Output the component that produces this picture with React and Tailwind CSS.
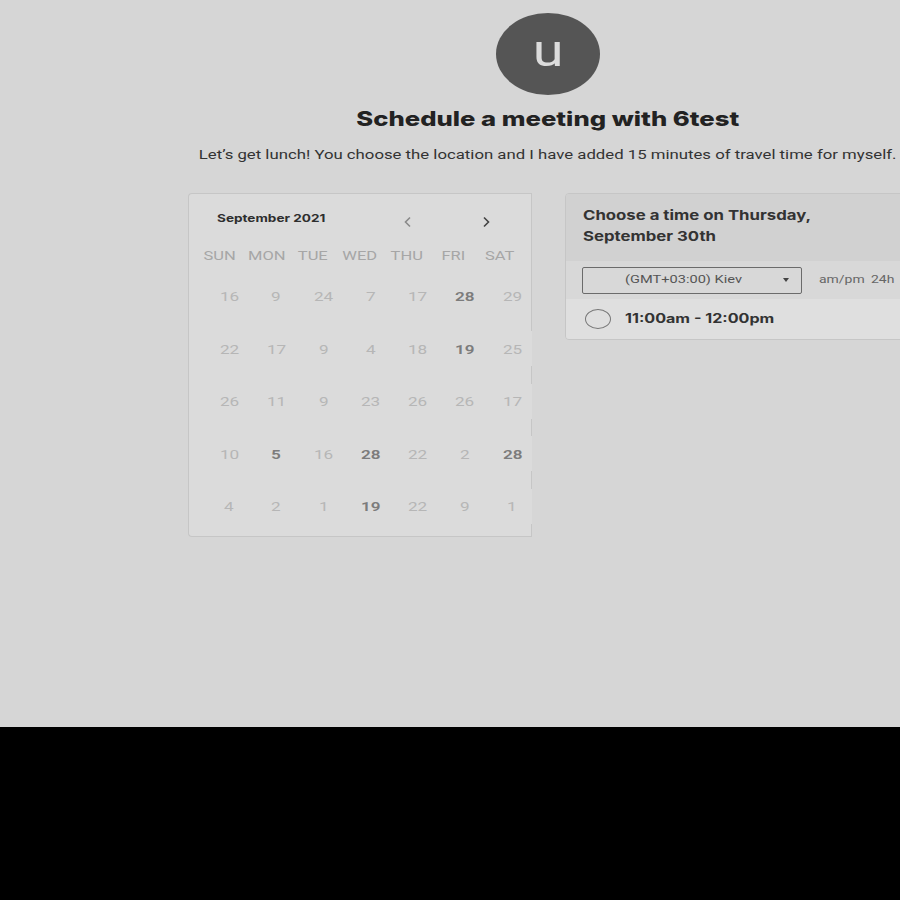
import React from 'react';

// Données du calendrier (affichage tel quel)
const weekDays = ['SUN', 'MON', 'TUE', 'WED', 'THU', 'FRI', 'SAT'];

const rows = [
  [[16], [9], [24], [7], [17], [28, true], [29]],
  [[22], [17], [9], [4], [18], [19, true], [25]],
  [[26], [11], [9], [23], [26], [26], [17]],
  [[10], [5, true], [16], [28, true], [22], [2], [28, true]],
  [[4], [2], [1], [19, true], [22], [9], [1]],
];

// La capture est étirée horizontalement : on élargit le texte de la même façon
const Wide = ({ children, className = '', left = false }) => (
  <span className={`inline-block scale-x-[1.27] ${left ? 'origin-left' : 'origin-center'} ${className}`}>
    {children}
  </span>
);

const ChevronLeft = () => (
  <svg width="10" height="12" viewBox="0 0 10 12" fill="none">
    <path d="M7 1.5 L2.5 6 L7 10.5" stroke="#8a8a8a" strokeWidth="1.6" />
  </svg>
);

const ChevronRight = () => (
  <svg width="10" height="12" viewBox="0 0 10 12" fill="none">
    <path d="M3 1.5 L7.5 6 L3 10.5" stroke="#444" strokeWidth="1.6" />
  </svg>
);

const Calendar = () => (
  <div className="w-[344px] h-[344px] shrink-0 flex flex-col bg-[#dbdbdb] border-l border-t border-b border-[#c6c6c6] rounded-l-sm">
    {/* En-tête du mois */}
    <div className="h-[50px] flex items-center border-r border-[#c6c6c6]">
      <div className="pl-[28px] w-[180px] text-[10.7px] font-bold text-[#2e2e2e] font-['Inter',sans-serif]">
        <Wide left>September 2021</Wide>
      </div>
      <div className="w-[78px] flex justify-center pt-[6px]"><ChevronLeft /></div>
      <div className="w-[78px] flex justify-center pt-[6px]"><ChevronRight /></div>
    </div>

    {/* Jours de la semaine */}
    <div className="h-[26px] flex items-start pl-[8px] border-r border-[#c6c6c6]">
      {weekDays.map((d) => (
        <div key={d} className="w-[46.7px] text-center text-[13px] text-[#a6a6a6] font-['Roboto',sans-serif] leading-[20px] pt-[2px]">
          <Wide>{d}</Wide>
        </div>
      ))}
    </div>

    {/* Grille des jours */}
    {rows.map((row, ri) => (
      <div key={ri} className="h-[52.5px] flex">
        <div className="flex-1 min-w-0 flex items-center pl-[17px]">
          {row.map(([n, strong], ci) => (
            <div
              key={ci}
              className={`w-[47.2px] shrink-0 text-center text-[13.5px] font-['Roboto',sans-serif] ${strong ? 'font-semibold text-[#7c7c7c]' : 'text-[#b6b6b6]'}`}
            >
              <Wide>{n}</Wide>
            </div>
          ))}
        </div>
        {ri === 0 ? (
          <div className="w-px shrink-0 bg-[#c6c6c6]" />
        ) : (
          <div className="w-px shrink-0 flex flex-col">
            <div className="flex-1 bg-[#c6c6c6]" />
            <div className="h-[35px]" />
            <div className="flex-1 bg-[#c6c6c6]" />
          </div>
        )}
      </div>
    ))}
    <div className="flex-1 border-r border-[#c6c6c6]" />
  </div>
);

const TimePanel = () => (
  <div className="w-[344px] shrink-0 border border-[#c6c6c6] rounded-sm overflow-hidden self-start">
    <div className="h-[67px] bg-[#d1d1d1] pl-[17px] pt-[11px] text-[13.2px] leading-[21px] font-bold text-[#333] font-['Inter',sans-serif]">
      <Wide left>Choose a time on Thursday,</Wide>
      <br />
      <Wide left>September 30th</Wide>
    </div>
    <div className="h-[38px] bg-[#d8d8d8] flex items-center pl-[16px]">
      <div className="w-[220px] h-[27px] border border-[#6b6b6b] rounded-[2px] flex items-center">
        <span className="ml-[42px] text-[11.5px] text-[#555] font-['Roboto',sans-serif]">
          <Wide left>(GMT+03:00) Kiev</Wide>
        </span>
        <span className="ml-auto mr-[12px] w-0 h-0 border-l-[3.5px] border-r-[3.5px] border-t-[4px] border-l-transparent border-r-transparent border-t-[#444]" />
      </div>
      <span className="ml-[17px] w-[52px] text-[11px] text-[#666] font-['Roboto',sans-serif]">
        <Wide left>am/pm</Wide>
      </span>
      <span className="text-[11px] text-[#666] font-['Roboto',sans-serif]">
        <Wide left>24h</Wide>
      </span>
    </div>
    <div className="h-[40px] bg-[#dfdfdf] flex items-center pl-[19px]">
      <div className="w-[26px] h-[20px] rounded-[50%] border-[1.5px] border-[#777]" />
      <span className="ml-[14px] text-[12.7px] font-bold text-[#333] font-['Inter',sans-serif]">
        <Wide left>11:00am - 12:00pm</Wide>
      </span>
    </div>
  </div>
);

export default function App() {
  return (
    <div className="w-[900px] h-[900px] overflow-hidden bg-black">
      <div className="h-[727px] bg-[#d6d6d6] overflow-hidden">
        <div className="w-[1096px] flex flex-col items-center">
          {/* Avatar */}
          <div className="mt-[13px] w-[104px] h-[82px] rounded-[50%] bg-[#555] flex items-center justify-center">
            <span className="text-[44px] leading-none text-[#dcdcdc] font-['Roboto',sans-serif] -mt-[6px]">
              <Wide>u</Wide>
            </span>
          </div>

          <h1 className="mt-[11px] text-[20.2px] leading-[26px] font-extrabold text-[#222] font-['Inter',sans-serif]">
            <Wide>Schedule a meeting with 6test</Wide>
          </h1>

          <p className="mt-[14px] text-[13.2px] leading-[18px] text-[#333] font-['Roboto',sans-serif]">
            <Wide>Let’s get lunch! You choose the location and I have added 15 minutes of travel time for myself.</Wide>
          </p>

          <div className="mt-[29px] flex gap-[33px]">
            <Calendar />
            <TimePanel />
          </div>
        </div>
      </div>
    </div>
  );
}
